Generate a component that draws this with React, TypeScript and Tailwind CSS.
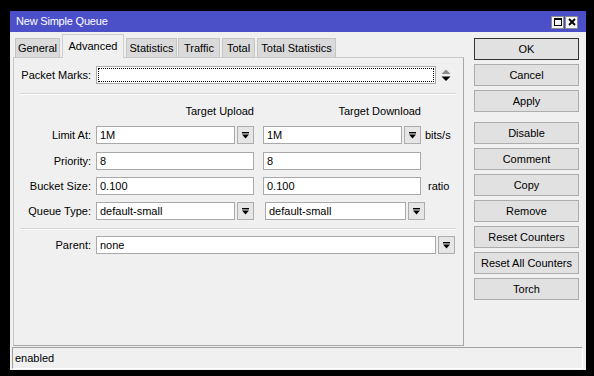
import React from "react";

const DropGlyph = () => (
  <svg width="7" height="7" viewBox="0 0 7 7">
    <rect x="0" y="0" width="7" height="1.4" fill="#000" />
    <polygon points="0,2.6 7,2.6 3.5,6.6" fill="#000" />
  </svg>
);

const DropBtn = ({ w = "w-[17px]" }: { w?: string }) => (
  <div className={`${w} h-[18px] ml-[2px] bg-[#e6e6e6] border border-[#adadad] flex items-center justify-center`}>
    <DropGlyph />
  </div>
);

const Input = ({ w, value }: { w: string; value: string }) => (
  <div className={`${w} h-[18px] bg-white border border-[#a9a9a9] pl-[3px] leading-[16px] whitespace-nowrap overflow-hidden`}>
    {value}
  </div>
);

const Label = ({ children }: { children: React.ReactNode }) => (
  <div className="w-[77px] text-right leading-[18px] whitespace-nowrap">{children}</div>
);

const Sep = ({ mt }: { mt: string }) => (
  <div className={`${mt} ml-[6px] w-[436px] h-[2px] border-t border-[#d6d6d6] border-b border-b-white`} />
);

const Btn = ({ children, def, mt }: { children: React.ReactNode; def?: boolean; mt?: string }) => (
  <div
    className={`${mt ?? ""} h-[22px] w-[105px] flex items-center justify-center bg-[#e1e1e1] border ${
      def ? "border-[#333333]" : "border-[#adadad]"
    } leading-none`}
  >
    {children}
  </div>
);

const Tab = ({ children, w, ml, active }: { children: React.ReactNode; w: string; ml: string; active?: boolean }) =>
  active ? (
    <div
      className={`${w} ${ml} h-[24px] -mb-px relative z-10 bg-[#f0f0f0] border border-b-0 border-[#cfcfcf] flex items-center justify-center pb-[1px]`}
    >
      {children}
    </div>
  ) : (
    <div className={`${w} ${ml} h-[19px] bg-[#dadada] border border-b-0 border-[#c6c6c6] flex items-center justify-center`}>
      {children}
    </div>
  );

export default function App() {
  return (
    <div
      className="w-[594px] h-[376px] bg-black pt-[11px] pl-[10px] text-[11px] text-black"
      style={{ fontFamily: "'Liberation Sans', Arial, sans-serif" }}
    >
      <div className="w-[576px] h-[359px] flex flex-col">
        {/* Title bar */}
        <div className="h-[21px] bg-[#4b50c8] flex items-center pl-[6px] pr-[8px] text-white">
          <span className="tracking-[-0.2px]">New Simple Queue</span>
          <div className="ml-auto flex gap-[1px] mt-[1px]">
            <div className="w-[13px] h-[13px] bg-[#f4f4f4] border border-[#8a8a8a] flex items-center justify-center">
              <svg width="8" height="8" viewBox="0 0 8 8">
                <rect x="0.5" y="0.5" width="7" height="7" fill="none" stroke="#000" strokeWidth="1" />
                <rect x="0" y="0" width="8" height="2" fill="#000" />
              </svg>
            </div>
            <div className="w-[13px] h-[13px] bg-[#f4f4f4] border border-[#8a8a8a] flex items-center justify-center">
              <svg width="8" height="8" viewBox="0 0 8 8">
                <path d="M1 1 L7 7 M7 1 L1 7" stroke="#000" strokeWidth="1.8" />
              </svg>
            </div>
          </div>
        </div>

        {/* Body */}
        <div className="flex-1 bg-[#f0f0f0] flex flex-col">
          <div className="h-[315px] flex">
            {/* Left column */}
            <div className="ml-[3px] w-[451px] flex flex-col">
              <div className="h-[25px] flex items-end">
                <Tab w="w-[45px]" ml="ml-[2px]">General</Tab>
                <Tab w="w-[62px]" ml="ml-[2px]" active>
                  Advanced
                </Tab>
                <Tab w="w-[51px]" ml="ml-[2px]">Statistics</Tab>
                <Tab w="w-[42px]" ml="ml-[1px]">Traffic</Tab>
                <Tab w="w-[33px]" ml="ml-[2px]">Total</Tab>
                <Tab w="w-[79px]" ml="ml-[2px]">Total Statistics</Tab>
              </div>
              <div className="h-[289px] border border-[#c8c8c8] border-r-[#a8a8a8] border-b-[#a8a8a8] flex flex-col">
                {/* Packet Marks */}
                <div className="mt-[8px] h-[18px] flex items-center">
                  <Label>Packet Marks:</Label>
                  <div className="ml-[5px] w-[340px] h-[18px] bg-white border border-[#a9a9a9] p-[1px]">
                    <div className="w-full h-full border border-dotted border-black" />
                  </div>
                  <svg className="ml-[5px]" width="10" height="13" viewBox="0 0 10 13">
                    <polygon points="0.5,5 9.5,5 5,0.5" fill="#8a8a8a" />
                    <polygon points="0.5,7.5 9.5,7.5 5,12" fill="#000" />
                  </svg>
                </div>
                <Sep mt="mt-[9px]" />
                {/* Headers */}
                <div className="mt-[10px] h-[13px] leading-[13px] flex pl-[82px]">
                  <div className="w-[158px] text-right">Target Upload</div>
                  <div className="ml-[9px] w-[158px] text-right">Target Download</div>
                </div>
                {/* Limit At */}
                <div className="mt-[8px] h-[18px] flex items-center">
                  <Label>Limit At:</Label>
                  <div className="ml-[5px] flex">
                    <Input w="w-[139px]" value="1M" />
                    <DropBtn />
                  </div>
                  <div className="ml-[9px] flex">
                    <Input w="w-[139px]" value="1M" />
                    <DropBtn />
                  </div>
                  <div className="ml-[4px] leading-[18px]">bits/s</div>
                </div>
                {/* Priority */}
                <div className="mt-[8px] h-[18px] flex items-center">
                  <Label>Priority:</Label>
                  <div className="ml-[5px] flex">
                    <Input w="w-[158px]" value="8" />
                  </div>
                  <div className="ml-[9px] flex">
                    <Input w="w-[158px]" value="8" />
                  </div>
                </div>
                {/* Bucket Size */}
                <div className="mt-[7px] h-[18px] flex items-center">
                  <Label>Bucket Size:</Label>
                  <div className="ml-[5px] flex">
                    <Input w="w-[158px]" value="0.100" />
                  </div>
                  <div className="ml-[9px] flex">
                    <Input w="w-[158px]" value="0.100" />
                  </div>
                  <div className="ml-[7px] leading-[18px]">ratio</div>
                </div>
                {/* Queue Type */}
                <div className="mt-[7px] h-[18px] flex items-center">
                  <Label>Queue Type:</Label>
                  <div className="ml-[5px] flex">
                    <Input w="w-[139px]" value="default-small" />
                    <DropBtn />
                  </div>
                  <div className="ml-[11px] flex">
                    <Input w="w-[141px]" value="default-small" />
                    <DropBtn />
                  </div>
                </div>
                <Sep mt="mt-[8px]" />
                {/* Parent */}
                <div className="mt-[6px] h-[18px] flex items-center">
                  <Label>Parent:</Label>
                  <div className="ml-[5px] flex">
                    <Input w="w-[340px]" value="none" />
                    <DropBtn />
                  </div>
                </div>
              </div>
            </div>
            {/* Right column buttons */}
            <div className="ml-[10px] pt-[6px] flex flex-col gap-[4px]">
              <Btn def>OK</Btn>
              <Btn>Cancel</Btn>
              <Btn>Apply</Btn>
              <Btn mt="mt-[6px]">Disable</Btn>
              <Btn>Comment</Btn>
              <Btn>Copy</Btn>
              <Btn>Remove</Btn>
              <Btn>Reset Counters</Btn>
              <Btn>Reset All Counters</Btn>
              <Btn>Torch</Btn>
            </div>
          </div>
          {/* Status bar */}
          <div className="ml-[2px] mr-[3px] h-[22px] border-t border-l border-[#a0a0a0] border-r border-r-white border-b border-b-white flex items-center pl-[2px]">
            enabled
          </div>
        </div>
      </div>
    </div>
  );
}
